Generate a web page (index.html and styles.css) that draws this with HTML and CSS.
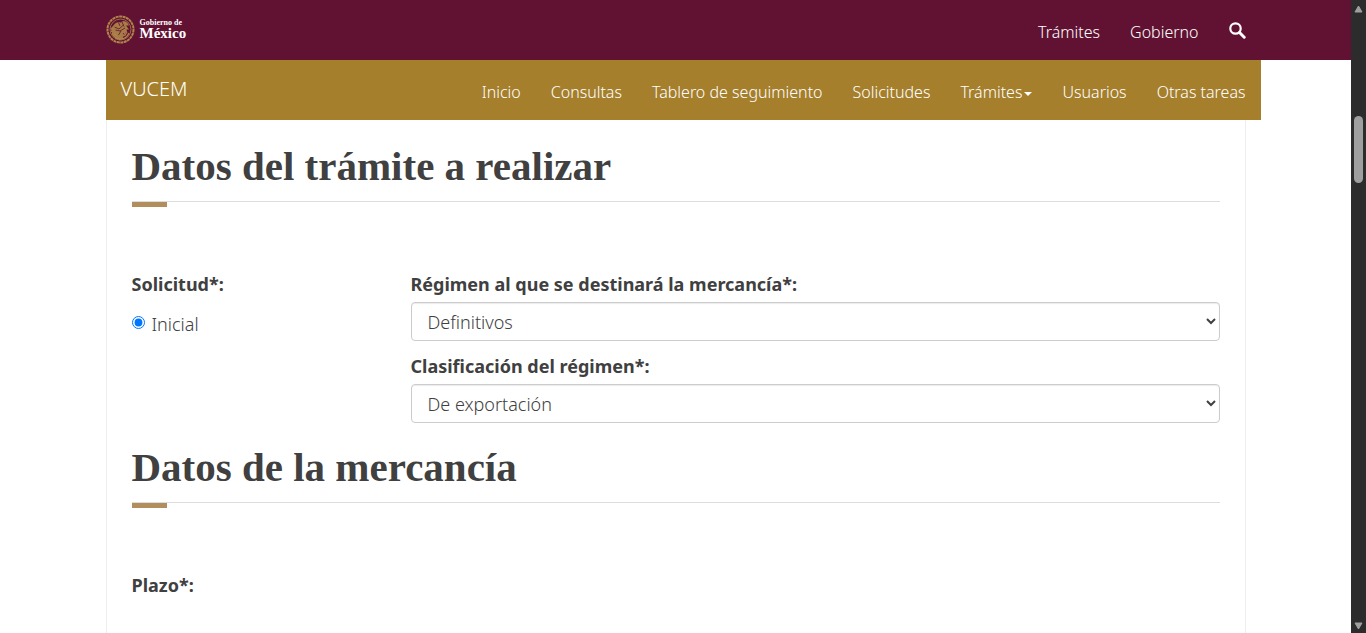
FILE: index.html
```html
<!DOCTYPE html>
<html lang="es">
<head>
<meta charset="utf-8">
<title>VUCEM</title>
<link rel="stylesheet" href="styles.css">
</head>
<body>
<div class="page">
  <header class="gov-bar">
    <div class="container gov-inner">
      <a class="logo" href="#">
        <svg class="seal" viewBox="0 0 58 58" fill="none" stroke="#b0854c" aria-hidden="true">
          <circle cx="29" cy="29" r="26" stroke-width="4" stroke-dasharray="6 1"/>
          <circle cx="29" cy="29" r="21" stroke-width="1.5"/>
          <path fill="#a87c46" stroke="none" d="M14 22c4-7 9-9 15-7l6-3c6 1 9 4 11 9l-6 0 6 8-5 0 2 8-5-2c1 5-2 8-5 9l4 4-6 0-4 3-3-4-6 2 2-5c-5-1-8-5-8-10l-3 1 2-5-3-2z"/>
          <path stroke="#611232" stroke-width="1.6" d="M17 24l9 4 9-8M19 30l9 2 10-6M25 15l3 7M30 32l-5 8M32 14l4 9M34 36l4 5"/>
          <path stroke-width="2.5" d="M12 36c4 9 11 12 17 12s13-3 17-12M17 36l4 7M41 35l-4 7"/>
        </svg>
        <span class="logo-text"><span class="logo-small">Gobierno de</span><span class="logo-big">México</span></span>
      </a>
      <nav class="gov-nav" aria-label="Gobierno">
        <a href="#">Trámites</a>
        <a href="#">Gobierno</a>
        <a href="#" aria-label="Buscar"><svg class="search" viewBox="0 0 17 17" fill="none" stroke="#fff" aria-hidden="true"><circle cx="6.5" cy="6.5" r="5.2" stroke-width="2.2"/><path d="M10.5 10.5l4.7 4.7" stroke-width="3" stroke-linecap="round"/></svg></a>
      </nav>
    </div>
  </header>
  <div class="container">
    <div class="app-bar">
      <a class="brand" href="#">VUCEM</a>
      <nav class="app-nav" aria-label="VUCEM">
        <a href="#">Inicio</a>
        <a href="#">Consultas</a>
        <a href="#">Tablero de seguimiento</a>
        <a href="#">Solicitudes</a>
        <a href="#">Trámites<span class="caret"></span></a>
        <a href="#">Usuarios</a>
        <a href="#">Otras tareas</a>
      </nav>
    </div>
  </div>
  <main class="container content">
    <h2>Datos del trámite a realizar</h2>
    <form class="form-grid">
      <fieldset>
        <legend class="label">Solicitud*:</legend>
        <label class="choice"><input type="radio" name="solicitud" checked>Inicial</label>
      </fieldset>
      <div class="fields">
        <label class="label" for="regimen">Régimen al que se destinará la mercancía*:</label>
        <select id="regimen"><option>Definitivos</option></select>
        <label class="label" for="clasificacion">Clasificación del régimen*:</label>
        <select id="clasificacion"><option>De exportación</option></select>
      </div>
    </form>
    <h2>Datos de la mercancía</h2>
    <p class="label">Plazo*:</p>
  </main>
</div>
<div class="scrollbar" aria-hidden="true">
  <svg class="arrow" viewBox="0 0 9 8"><path d="M4.5 1L8 7H1z" fill="#9f9f9f" stroke="#9f9f9f" stroke-linejoin="round"/></svg>
  <div class="track"><div class="thumb"></div></div>
  <svg class="arrow" viewBox="0 0 9 8"><path d="M4.5 7L8 1H1z" fill="#9f9f9f" stroke="#9f9f9f" stroke-linejoin="round"/></svg>
</div>
</body>
</html>
```

FILE: styles.css
```css
* { box-sizing: border-box; }
body {
  margin: 0;
  height: 100vh;
  overflow: hidden;
  display: flex;
  background: #fff;
  color: #404041;
  font-family: "Noto Sans", "Open Sans", sans-serif;
  font-size: 18px;
  font-weight: 300;
  line-height: 26px;
}
a { color: #fff; text-decoration: none; }
.page { flex: 1; min-width: 0; display: flex; flex-direction: column; }
.container { width: 100%; max-width: 1140px; margin: 0 auto; }

.gov-bar { background: #611232; }
.gov-inner { height: 60px; display: flex; justify-content: space-between; align-items: center; }
.logo { display: flex; align-items: center; gap: 5px; padding-bottom: 2px; }
.seal { width: 29px; height: 29px; }
.logo-text { display: flex; flex-direction: column; font-family: "Liberation Serif", serif; font-weight: 700; }
.logo-small { font-size: 8px; line-height: 8px; }
.logo-big { font-size: 15px; line-height: 12px; }
.gov-nav, .app-nav { display: flex; font-size: 16px; }
.gov-nav { gap: 30px; padding-top: 4px; }
.search { display: block; width: 17px; height: 17px; margin-top: 3px; }

.app-bar {
  height: 60px;
  margin-right: -15px;
  padding: 0 15px;
  display: flex;
  justify-content: space-between;
  align-items: center;
  background: #a57f2c;
}
.brand { font-size: 20px; padding-bottom: 2px; }
.app-nav { gap: 30px; padding-top: 4px; }
.app-nav a { white-space: nowrap; }
.caret {
  display: inline-block;
  margin-left: 2px;
  vertical-align: middle;
  border-top: 4px solid #fff;
  border-left: 4px solid transparent;
  border-right: 4px solid transparent;
}

.content { flex: 1; padding: 20px 25px 0; border: solid #eee; border-width: 0 1px; }
h2 {
  margin: 0 0 64px;
  padding: 3px 0 12px;
  position: relative;
  border-bottom: 1px solid #ddd;
  font-family: "Liberation Serif", serif;
  font-size: 41px;
  font-weight: 700;
  line-height: 46px;
}
h2::after {
  content: "";
  position: absolute;
  left: 0;
  top: 100%;
  margin-top: 1px;
  width: 35px;
  height: 5px;
  background: #b38e5d;
}
.label { display: block; margin: 0; padding: 0; font-weight: 700; line-height: 36px; }
.form-grid { display: grid; grid-template-columns: 279px 1fr; margin-bottom: 11px; }
fieldset { margin: 0; padding: 0; border: 0; min-width: 0; }
.choice { display: flex; align-items: center; gap: 7px; padding-top: 9px; }
.choice input { width: 13px; height: 13px; margin: 0 0 4px; }
.fields { display: flex; flex-direction: column; }
select {
  width: 100%;
  height: 39px;
  margin-bottom: 7px;
  padding: 6px 0 6px 12px;
  border: 1px solid #ccc;
  border-radius: 4px;
  background: #fff;
  box-shadow: inset 0 1px 1px rgba(0, 0, 0, .08);
  color: #404041;
  font: inherit;
}

.scrollbar { width: 15px; padding: 5px 3px 3px; display: flex; flex-direction: column; background: #2c2c2c; }
.arrow { width: 9px; height: 8px; flex: none; }
.track { flex: 1; padding-top: 103px; }
.thumb { height: 67px; border-radius: 5px; background: #9f9f9f; }
```
